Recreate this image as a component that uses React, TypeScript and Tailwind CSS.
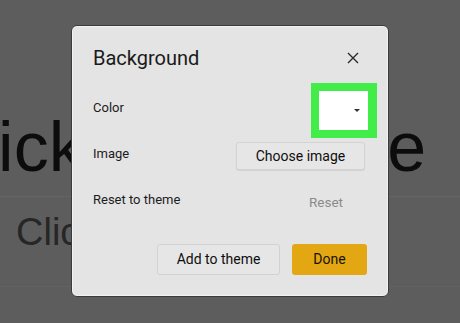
import React from "react";

const sans = { fontFamily: "Roboto, 'Liberation Sans', sans-serif" };

const Row = ({ label, children }: { label: string; children: React.ReactNode }) => (
  <div className="flex h-[46px] items-center justify-between">
    <span className="pb-[4px] text-[13px] text-[#1c1c1c]">{label}</span>
    {children}
  </div>
);

export default function App() {
  return (
    <div className="relative h-[323px] w-[460px] overflow-hidden bg-[#5d5d5d]">
      {/* slide behind the overlay */}
      <div className="pt-[112px]" style={{ fontFamily: "'Liberation Sans', Arial, sans-serif" }}>
        <div className="ml-[-68px] h-[70px] whitespace-nowrap text-[70px] leading-none text-[#0c0c0c]">
          Click to add title
        </div>
        <div className="mt-[14px] h-px bg-[#656565]" />
        <div className="ml-[16px] mt-[16px] whitespace-nowrap text-[38px] leading-none text-[#262626]">
          Click to add subtitle
        </div>
        <div className="mt-[35px] h-px bg-[#626262]" />
      </div>

      {/* dialog */}
      <div
        className="absolute left-[71px] top-[25px] flex h-[272px] w-[318px] flex-col rounded-[6px] border border-[#3a3a3a] bg-[#e4e4e4] px-[21px] pt-[19px] shadow-[inset_0_0_0_1px_#f2f2f2]"
        style={sans}
      >
        <div className="flex h-[26px] items-center justify-between">
          <span className="text-[20px] text-[#1a1a1a]">Background</span>
          <svg width="12" height="12" viewBox="0 0 12 12" className="mr-[8px]">
            <path d="M1 1L11 11M11 1L1 11" stroke="#2a2a2a" strokeWidth="1.4" />
          </svg>
        </div>

        <div className="mt-[16px] flex flex-col">
          <Row label="Color">
            <div className="-mr-[10px] h-[55px] w-[66px] bg-[#42ec49] p-[8px] pl-[8px] pr-[9px]">
              <div className="flex h-full items-center justify-end bg-white pr-[8px]">
                <div className="h-0 w-0 border-l-[3px] border-r-[3px] border-t-[3px] border-l-transparent border-r-transparent border-t-[#333]" />
              </div>
            </div>
          </Row>
          <Row label="Image">
            <button className="mr-[2px] h-[28px] w-[129px] rounded-[3px] border border-[#d3d3d3] bg-[#e6e6e6] text-[14px] text-[#0e0e0e] shadow-[0_1px_1px_rgba(0,0,0,0.08)]">
              Choose image
            </button>
          </Row>
          <Row label="Reset to theme">
            <span className="mr-[24px] text-[13.5px] text-[#8a8a8a]">Reset</span>
          </Row>
        </div>

        <div className="mt-[19px] flex justify-end gap-[12px]">
          <button className="h-[31px] w-[123px] rounded-[3px] border border-[#d2d2d2] bg-[#e6e6e6] text-[14px] text-[#0e0e0e]">
            Add to theme
          </button>
          <button className="h-[31px] w-[75px] rounded-[3px] bg-[#e3a714] text-[14px] text-[#171200]">
            Done
          </button>
        </div>
      </div>
    </div>
  );
}
